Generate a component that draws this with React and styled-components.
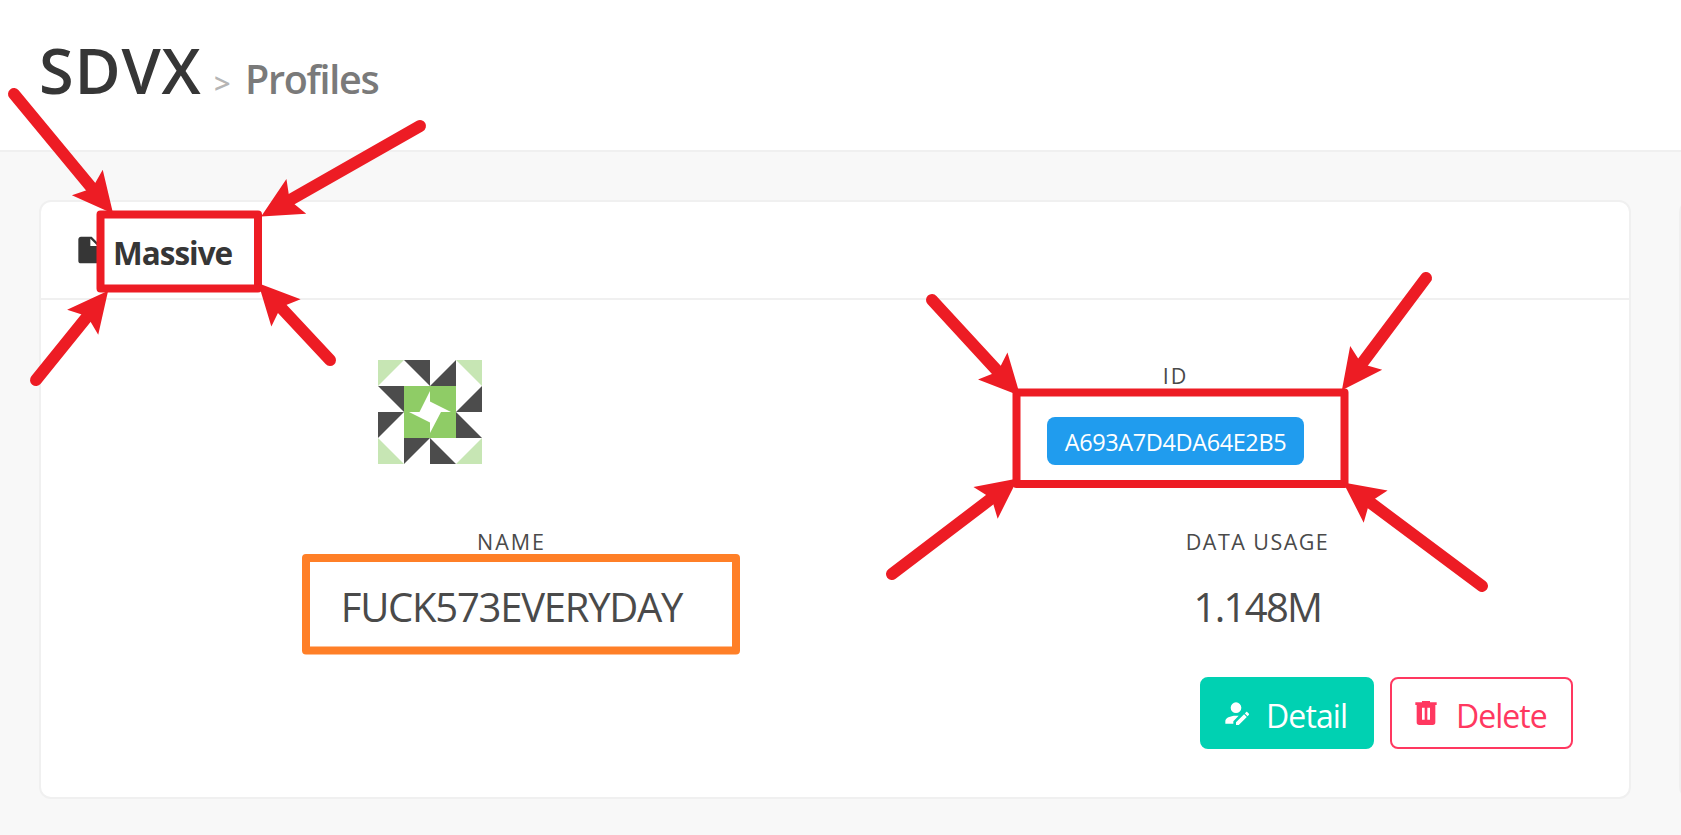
import React from "react";
import styled, { createGlobalStyle } from "styled-components";

const GlobalStyle = createGlobalStyle`
  * { box-sizing: border-box; }
  body {
    margin: 0;
    background: #f8f8f8;
    color: #4a4a4a;
    font-family: "Open Sans", "Noto Sans", sans-serif;
    overflow: hidden;
  }
`;

const Page = styled.div`
  position: relative;
  width: 1681px;
  height: 835px;
  overflow: hidden;
`;

const TitleBar = styled.header`
  display: flex;
  align-items: baseline;
  height: 152px;
  padding: 21px 0 0 39px;
  background: #fff;
  border-bottom: 2px solid #f0f0f0;
  line-height: 98px;
  white-space: nowrap;
`;

const Title = styled.h1`
  margin: 0;
  width: 175px;
  font-size: 63px;
  font-weight: 600;
  letter-spacing: 0.8px;
  color: #363636;
`;

const Separator = styled.span`
  width: 31px;
  font-size: 29px;
  font-weight: 600;
  color: #b5b5b5;
`;

const Subtitle = styled.span`
  font-size: 39.5px;
  font-weight: 600;
  letter-spacing: -1.3px;
  color: #7a7a7a;
`;

const Cards = styled.main`
  display: flex;
  gap: 48px;
  padding: 48px 0 0 39px;
`;

const Card = styled.section`
  flex: none;
  width: 1592px;
  height: 599px;
  background: #fff;
  border: 2px solid #f0f0f0;
  border-radius: 12px;
`;

const CardHeader = styled.div`
  display: flex;
  align-items: center;
  height: 98px;
  padding-left: 32px;
  border-bottom: 2px solid #f0f0f0;
`;

const CardTitle = styled.h2`
  margin: 6px 0 0 8px;
  font-size: 31.5px;
  font-weight: 700;
  line-height: 48px;
  letter-spacing: -1px;
  color: #363636;
`;

const Level = styled.div`
  display: grid;
  grid-template-columns: ${(p) => p.$columns};
  height: ${(p) => p.$height}px;
  padding-top: ${(p) => p.$top}px;
`;

const LevelItem = styled.div`
  display: flex;
  flex-direction: column;
  align-items: center;
`;

const Heading = styled.p`
  margin: 0;
  font-size: 21.5px;
  line-height: 32px;
  letter-spacing: ${(p) => p.$spacing}px;
`;

const Value = styled.p`
  margin: 0;
  padding-top: 19px;
  font-size: 40px;
  line-height: 60px;
  letter-spacing: ${(p) => p.$spacing}px;
`;

const Tag = styled.span`
  display: flex;
  align-items: center;
  justify-content: center;
  width: 257px;
  height: 48px;
  margin-top: 25px;
  padding-top: 2px;
  border-radius: 8px;
  background: #209cee;
  color: #fff;
  font-size: 23.5px;
  letter-spacing: -0.4px;
`;

const Actions = styled.div`
  display: flex;
  justify-content: flex-end;
  gap: 16px;
  padding: 17px 56px 0 0;
`;

const Button = styled.button`
  display: flex;
  align-items: center;
  width: ${(p) => p.$width}px;
  height: 72px;
  padding: 0 0 0 18px;
  border: 2px solid ${(p) => (p.$outlined ? "#ff3860" : "#00d1b2")};
  border-radius: 8px;
  background: ${(p) => (p.$outlined ? "#fff" : "#00d1b2")};
  color: ${(p) => (p.$outlined ? "#ff3860" : "#fff")};
  font: 400 32px/48px "Open Sans", "Noto Sans", sans-serif;
  letter-spacing: ${(p) => p.$spacing}px;
`;

const ButtonLabel = styled.span`
  padding: 5px 0 0 14px;
`;

const Icon = styled.svg`
  flex: none;
  display: block;
  width: 32px;
  height: 32px;
  fill: currentColor;
  color: ${(p) => p.$color || "inherit"};
`;

const Avatar = styled.svg`
  display: block;
  width: 104px;
  height: 104px;
`;

const Annotations = styled.svg`
  position: absolute;
  inset: 0;
  pointer-events: none;
`;

const FILE =
  "M13,9V3.5L18.5,9M6,2C4.89,2 4,2.89 4,4V20A2,2 0 0,0 6,22H18A2,2 0 0,0 20,20V8L14,2H6Z";
const ACCOUNT_EDIT =
  "M21.7,13.35L20.7,14.35L18.65,12.3L19.65,11.3C19.86,11.09 20.21,11.09 20.42,11.3L21.7,12.58C21.91,12.79 21.91,13.14 21.7,13.35M12,18.94L18.06,12.88L20.11,14.93L14.06,21H12V18.94M12,14C7.58,14 4,15.79 4,18V20H10V18.11L14,14.11C13.34,14.03 12.67,14 12,14M12,4A4,4 0 0,0 8,8A4,4 0 0,0 12,12A4,4 0 0,0 16,8A4,4 0 0,0 12,4Z";
const TRASH =
  "M9,3V4H4V6H5V19A2,2 0 0,0 7,21H17A2,2 0 0,0 19,19V6H20V4H15V3H9M9,8H11V17H9V8M13,8H15V17H13V8Z";

function Identicon() {
  return (
    <Avatar viewBox="0 0 104 104">
      {[0, 90, 180, 270].map((angle) => (
        <g key={angle} transform={`rotate(${angle} 52 52)`}>
          <path d="M0 0H26L0 26Z" fill="#c7e6b4" />
          <path d="M26 0H52V26Z" fill="#4c4c4c" />
          <path d="M52 26L78 0V26Z" fill="#4c4c4c" />
          <path d="M26 26H52V52H26Z" fill="#8fcc66" />
        </g>
      ))}
      <path d="M52 31V41.5L73 52H63L52 73V62.500L31 52H41.500Z" fill="#fff" />
    </Avatar>
  );
}

function Arrow({ from, to }) {
  const [x1, y1] = from;
  const [x2, y2] = to;
  const length = Math.hypot(x2 - x1, y2 - y1);
  const angle = (Math.atan2(y2 - y1, x2 - x1) * 180) / Math.PI;
  return (
    <g transform={`translate(${x2} ${y2}) rotate(${angle})`}>
      <path
        d={`M${-length} 0H-27`}
        stroke="#ed1c24"
        strokeWidth="12"
        strokeLinecap="round"
      />
      <path d="M1 0L-39.500 -20L-34 -5.500V5.500L-39.500 20Z" fill="#ed1c24" />
    </g>
  );
}

const arrows = [
  { from: [14, 94], to: [112.5, 213] },
  { from: [420, 126], to: [262, 216] },
  { from: [36, 380], to: [107.5, 291.5] },
  { from: [330, 360], to: [259, 284] },
  { from: [932, 300], to: [1019.5, 395] },
  { from: [1426, 278], to: [1342.5, 389.5] },
  { from: [892, 574], to: [1017, 479] },
  { from: [1482, 586], to: [1344, 483] },
];

function Frame({ x, y, width, height, color }) {
  return (
    <rect
      x={x}
      y={y}
      width={width}
      height={height}
      fill="none"
      stroke={color}
      strokeWidth="8"
      strokeLinejoin="round"
    />
  );
}

export default function App() {
  return (
    <Page>
      <GlobalStyle />
      <TitleBar>
        <Title>SDVX</Title>
        <Separator>&gt;</Separator>
        <Subtitle>Profiles</Subtitle>
      </TitleBar>
      <Cards>
        <Card>
          <CardHeader>
            <Icon viewBox="0 0 24 24" $color="#363636">
              <path d={FILE} />
            </Icon>
            <CardTitle>Massive</CardTitle>
          </CardHeader>
          <Level $columns="778px 713px" $height={226} $top={60}>
            <LevelItem>
              <Identicon />
            </LevelItem>
            <LevelItem>
              <Heading $spacing={2}>ID</Heading>
              <Tag>A693A7D4DA64E2B5</Tag>
            </LevelItem>
          </Level>
          <Level $columns="941px 551px" $height={134} $top={0}>
            <LevelItem>
              <Heading $spacing={2}>NAME</Heading>
              <Value $spacing={-1.25}>FUCK573EVERYDAY</Value>
            </LevelItem>
            <LevelItem>
              <Heading $spacing={1.45}>DATA USAGE</Heading>
              <Value $spacing={-1.7}>1.148M</Value>
            </LevelItem>
          </Level>
          <Actions>
            <Button $width={174} $spacing={-0.9}>
              <Icon viewBox="0 0 24 24">
                <path d={ACCOUNT_EDIT} />
              </Icon>
              <ButtonLabel>Detail</ButtonLabel>
            </Button>
            <Button $width={183} $spacing={-1} $outlined>
              <Icon viewBox="0 0 24 24">
                <path d={TRASH} />
              </Icon>
              <ButtonLabel>Delete</ButtonLabel>
            </Button>
          </Actions>
        </Card>
        <Card />
      </Cards>
      <Annotations width="1681" height="835" viewBox="0 0 1681 835">
        <Frame x={100.5} y={214.5} width={157.5} height={74} color="#ed1c24" />
        <Frame x={1016.5} y={392.500} width={328} height={91.5} color="#ed1c24" />
        <Frame x={306} y={558} width={430} height={92.500} color="#ff7f27" />
        {arrows.map((arrow, i) => (
          <Arrow key={i} {...arrow} />
        ))}
      </Annotations>
    </Page>
  );
}
